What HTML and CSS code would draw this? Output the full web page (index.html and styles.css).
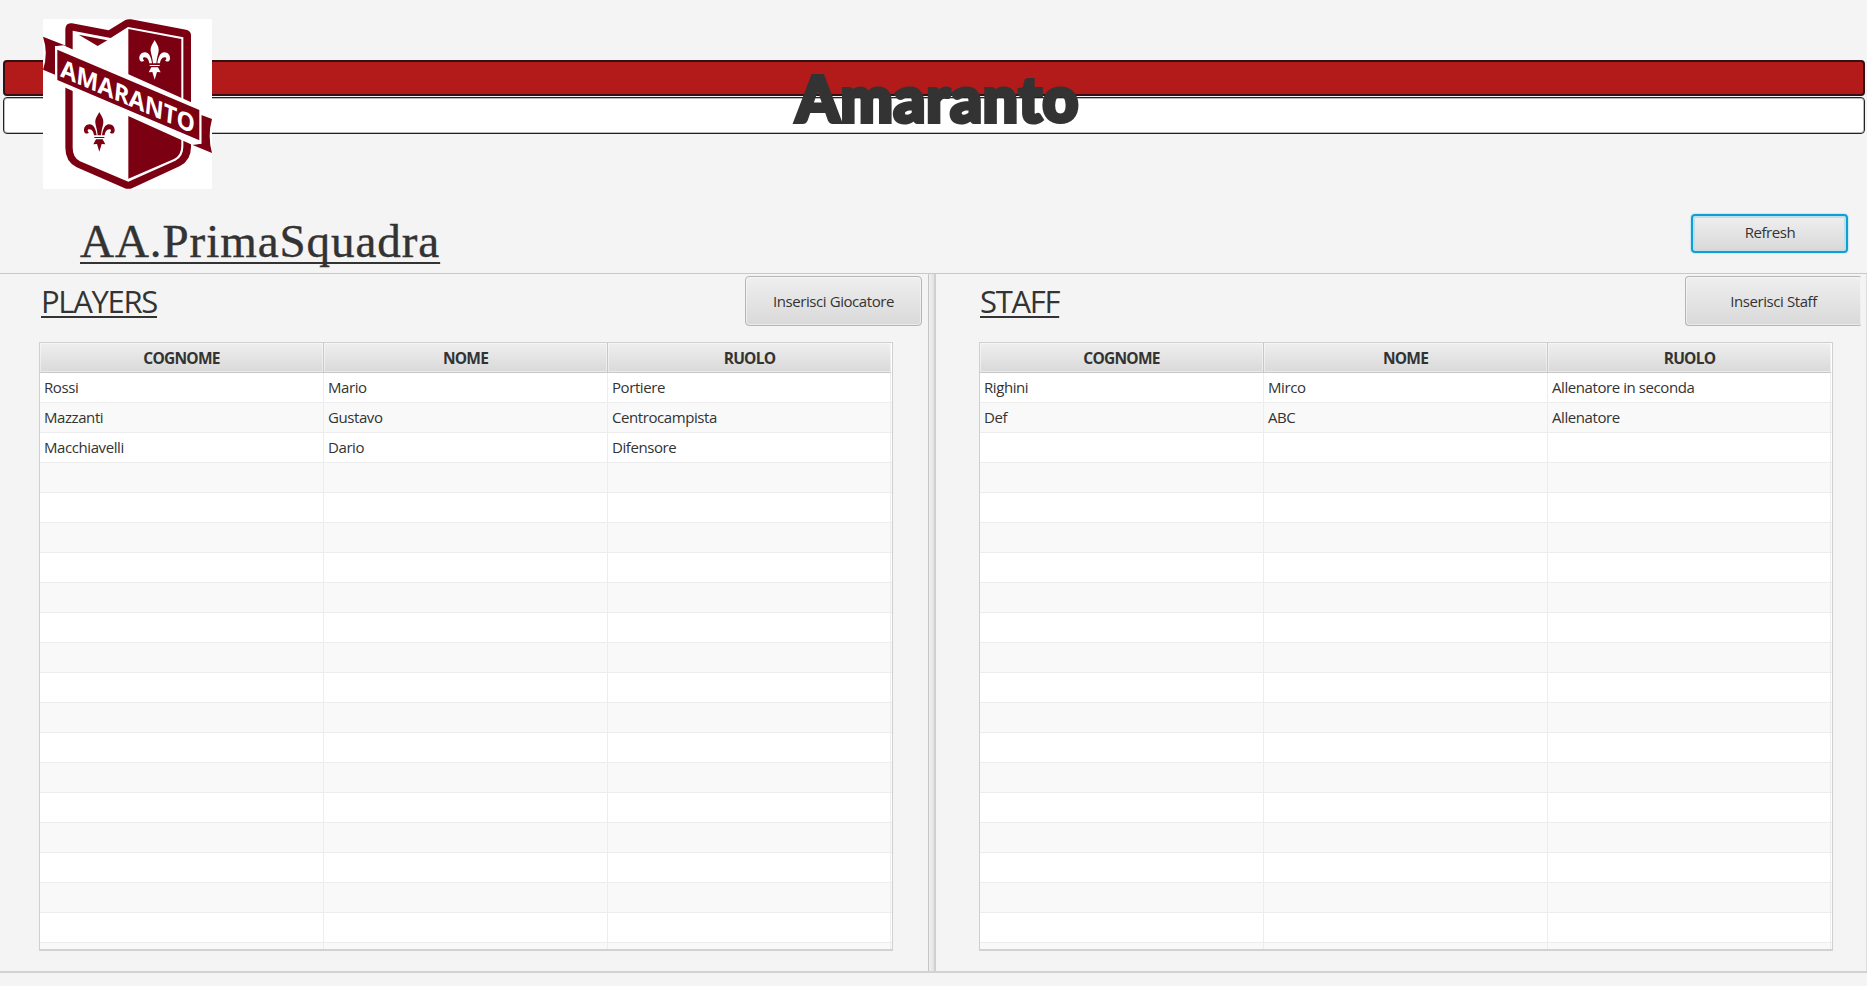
FILE: index.html
```html
<!DOCTYPE html>
<html lang="it">
<head>
<meta charset="utf-8">
<title>Amaranto</title>
<link rel="stylesheet" href="styles.css">
</head>
<body>
<header class="top">
  <div class="stripes">
    <div class="stripe red"></div>
    <div class="stripe white"></div>
  </div>
  <svg class="logo" viewBox="129 57 507 510" preserveAspectRatio="none">
    <defs>
      <g id="lily">
        <path d="M0-46C-6-34-13-26-12-14C-11-4-6 8-5 24H5C6 8 11-4 12-14C13-26 6-34 0-46Z"/>
        <path d="M-8 24C-10 8-16-9-29-9C-40-9-47 0-46 10C-45 19-36 22-31 15C-37 13-36 6-30 6C-21 6-17 16-16 24Z"/>
        <path d="M8 24C10 8 16-9 29-9C40-9 47 0 46 10C45 19 36 22 31 15C37 13 36 6 30 6C21 6 17 16 16 24Z"/>
        <path d="M-15 29H15V32H-15ZM-10 36H10L18 51L7 50L0 73L-7 50L-18 51Z"/>
      </g>
    </defs>
    <rect x="129" y="57" width="507" height="510" fill="#fff"/>
    <path fill="#7b0012" d="M216 70L326 91L375 61Q383 56 393 58L558 89Q573 92 573 106V441Q573 481 540 498L399 563Q385 570 371 563L230 502Q196 484 196 443V88Q197 67 216 70Z"/>
    <path fill="#fff" d="M218 92L332 114L384 81L550 112V440Q550 470 526 482L385 545L240 484Q218 472 218 443Z"/>
    <path fill="#7b0012" d="M385 87L544 117V438Q544 466 522 477L385 536ZM236 104L322 121L293 138Z"/>
    <path fill="#7b0012" d="M129 110L198 137L165 139V224L129 209Q146 160 129 110ZM636 357L604 345V431L576 434L636 459Q622 408 636 357Z"/>
    <path fill="#fff" d="M165 139L190 136L604 320V431L576 434L165 249Z"/>
    <path fill="#7b0012" d="M172 149L598 330V421L172 240Z"/>
    <text class="logo-name" transform="matrix(.91 .39 -.1 1 180 229)" textLength="442" lengthAdjust="spacingAndGlyphs">AMARANTO</text>
    <use href="#lily" x="464" y="166" fill="#fff"/>
    <use href="#lily" x="298" y="382" fill="#7b0012"/>
  </svg>
  <h1 class="title">Amaranto</h1>
  <h2 class="team">AA.PrimaSquadra</h2>
  <button class="btn refresh">Refresh</button>
</header>
<main class="split">
  <section class="pane">
    <div class="bar"><h3>PLAYERS</h3><button class="btn insert">Inserisci Giocatore</button></div>
    <div class="table">
      <div class="row head"><span>COGNOME</span><span>NOME</span><span>RUOLO</span></div>
      <div class="body">
        <div class="row"><span>Rossi</span><span>Mario</span><span>Portiere</span></div>
        <div class="row"><span>Mazzanti</span><span>Gustavo</span><span>Centrocampista</span></div>
        <div class="row"><span>Macchiavelli</span><span>Dario</span><span>Difensore</span></div>
      </div>
    </div>
  </section>
  <div class="divider"></div>
  <section class="pane right">
    <div class="bar"><h3>STAFF</h3><button class="btn insert cut">Inserisci Staff</button></div>
    <div class="table">
      <div class="row head"><span>COGNOME</span><span>NOME</span><span>RUOLO</span></div>
      <div class="body">
        <div class="row"><span>Righini</span><span>Mirco</span><span>Allenatore in seconda</span></div>
        <div class="row"><span>Def</span><span>ABC</span><span>Allenatore</span></div>
      </div>
    </div>
  </section>
</main>
</body>
</html>
```
FILE: styles.css
```css
* { box-sizing: border-box; }
body {
  margin: 0;
  width: 1867px;
  height: 986px;
  overflow: hidden;
  background: #f4f4f4;
  color: #333;
  font: 15px/20px "Open Sans", "Noto Sans", sans-serif;
  letter-spacing: -0.42px;
}
h1, h2, h3 { margin: 0; font-weight: 400; }
.top {
  position: relative;
  height: 273px;
  padding-top: 60px;
}
.stripes { display: grid; gap: 1px; padding: 0 2px 0 3px; }
.stripe { height: 36px; border-radius: 4px; }
.red { background: #b31b1b; border: 2px solid #321014; }
.white { height: 37px; background: #fff; border: 1px solid #222; box-shadow: inset 0 0 0 1px #bbb; }
.logo { position: absolute; left: 43px; top: 19px; width: 169px; height: 170px; }
.logo-name { font: 700 73px "Open Sans", sans-serif; fill: #fff; letter-spacing: 0; }
.title {
  position: absolute;
  left: 796px;
  top: 60px;
  font: 900 62px/76px Lato, sans-serif;
  letter-spacing: 0.9px;
  -webkit-text-stroke: 4px #333;
  white-space: nowrap;
}
.team {
  position: absolute;
  left: 80px;
  top: 213px;
  font: 47px/56px "Liberation Serif", serif;
  letter-spacing: 0.95px;
  -webkit-text-stroke: 0.4px #333;
  text-decoration: underline 2px;
  text-underline-offset: 5px;
  text-decoration-skip-ink: none;
}
.btn {
  border: 1px solid #b5b5b5;
  border-radius: 4px;
  background: linear-gradient(#efefef, #d9d9d9);
  box-shadow: inset 0 0 0 1px rgba(255,255,255,.45);
  color: #333;
  font: inherit;
  letter-spacing: inherit;
  padding: 0;
}
.refresh {
  position: absolute;
  left: 1691px;
  top: 214px;
  width: 157px;
  height: 39px;
  padding: 0 0 3px 1px;
  border: 2px solid #109fd3;
  box-shadow: 0 0 1px 1px #c8e8f4, inset 0 0 0 2px #c3dde6;
}
.split {
  display: flex;
  height: 700px;
  border-top: 1px solid #c8c8c8;
  border-bottom: 2px solid #d2d2d2;
}
.pane { width: 928px; padding: 2px 0 0 39px; }
.right { width: 931px; padding-left: 43px; border-right: 1px solid #ddd; }
.divider {
  width: 8px;
  border-left: 1px solid #c4c4c4;
  border-right: 2px solid #d0d0d0;
  background: linear-gradient(90deg, #f0f0f0, #e2e2e2);
}
.bar { display: flex; height: 66px; }
h3 {
  margin: 4px 0 0 2px;
  width: 704px;
  font-size: 31px;
  line-height: 42px;
  letter-spacing: -1.3px;
  text-decoration: underline 2px;
  text-underline-offset: 3px;
  text-decoration-skip-ink: none;
}
.right h3 { margin-left: 1px; }
.insert { width: 177px; height: 50px; flex: none; }
.cut { width: 176px; border-right: 0; border-radius: 4px 2px 2px 4px; margin-left: 1px; }
.table {
  width: 854px;
  height: 609px;
  border: 1px solid #d0d0d0;
  border-bottom: 2px solid #d2d2d2;
  background: #fff;
}
.row { display: grid; grid-template-columns: 284px 284px 284px; height: 30px; }
.row span { padding: 4px 0 0 4px; }
.head { font-weight: 700; font-size: 15.5px; letter-spacing: -0.75px; border-bottom: 1px solid #c8c8c8; width: 851px; grid-template-columns: 284px 284px 283px; }
.head span {
  padding: 5px 0 0;
  text-align: center;
  background: linear-gradient(#efefef, #d9d9d9);
  border-right: 1px solid #c8c8c8;
  box-shadow: inset 0 0 0 1px rgba(255,255,255,.45);
}
.head span:last-child { border-right: 0; }
.body {
  height: 576px;
  background:
    linear-gradient(#ededed, #ededed) 283px 0 / 1px 100% no-repeat,
    linear-gradient(#ededed, #ededed) 567px 0 / 1px 100% no-repeat,
    linear-gradient(#ededed, #ededed) 850px 0 / 1px 100% no-repeat,
    repeating-linear-gradient(#fff 0 29px, #ededed 29px 30px, #f9f9f9 30px 59px, #ededed 59px 60px);
}
```
